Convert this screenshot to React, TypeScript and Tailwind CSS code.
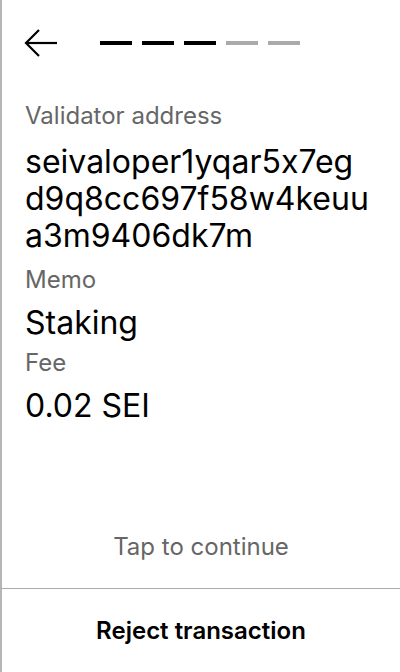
const Dash = ({ on }: { on: boolean }) => (
  <div className={on ? "h-[4px] w-[32px] bg-black" : "h-[4px] w-[32px] bg-[#aaaaaa]"} />
);

export default function App() {
  const steps = [true, true, true, false, false];

  return (
    <div className="flex h-[672px] w-[400px] flex-col border-l-2 border-[#b5b5b5] bg-white font-['Inter',sans-serif] text-black [font-feature-settings:'calt'_0]">
      {/* header */}
      <div className="flex items-center pl-[22px] pt-[28px]">
        <svg width="34" height="30" viewBox="0 0 34 30" fill="none" stroke="black" strokeWidth="2.2">
          <path d="M33 15H3" />
          <path d="M15 2L2 15l13 13" />
        </svg>
        <div className="ml-[42px] flex gap-[10px]">
          {steps.map((s, i) => (
            <Dash key={i} on={s} />
          ))}
        </div>
      </div>

      <div className="flex flex-1 flex-col pt-[44px]">
        <div className="flex flex-col pl-[23px]">
          <div className="text-[24px] leading-[28px] text-[#666666]">Validator address</div>
          <div className="mt-[13px] text-[32px] leading-[37px]">
            seivaloper1yqar5x7eg
            <br />
            d9q8cc697f58w4keuu
            <br />
            a3m9406dk7m
          </div>
          <div className="mt-[12px] text-[24px] leading-[28px] text-[#666666]">Memo</div>
          <div className="mt-[10px] text-[32px] leading-[37px]">Staking</div>
          <div className="mt-[8px] text-[24px] leading-[28px] text-[#666666]">Fee</div>
          <div className="mt-[10px] text-[32px] leading-[37px]">0.02 SEI</div>
        </div>

        <div className="mt-auto pb-[27px] text-center text-[24px] leading-[28px] text-[#666666]">Tap to continue</div>
      </div>

      <div className="flex h-[84px] items-center justify-center border-t border-[#aaaaaa] text-[24px] leading-[28px] font-semibold">
        Reject transaction
      </div>
    </div>
  );
}
